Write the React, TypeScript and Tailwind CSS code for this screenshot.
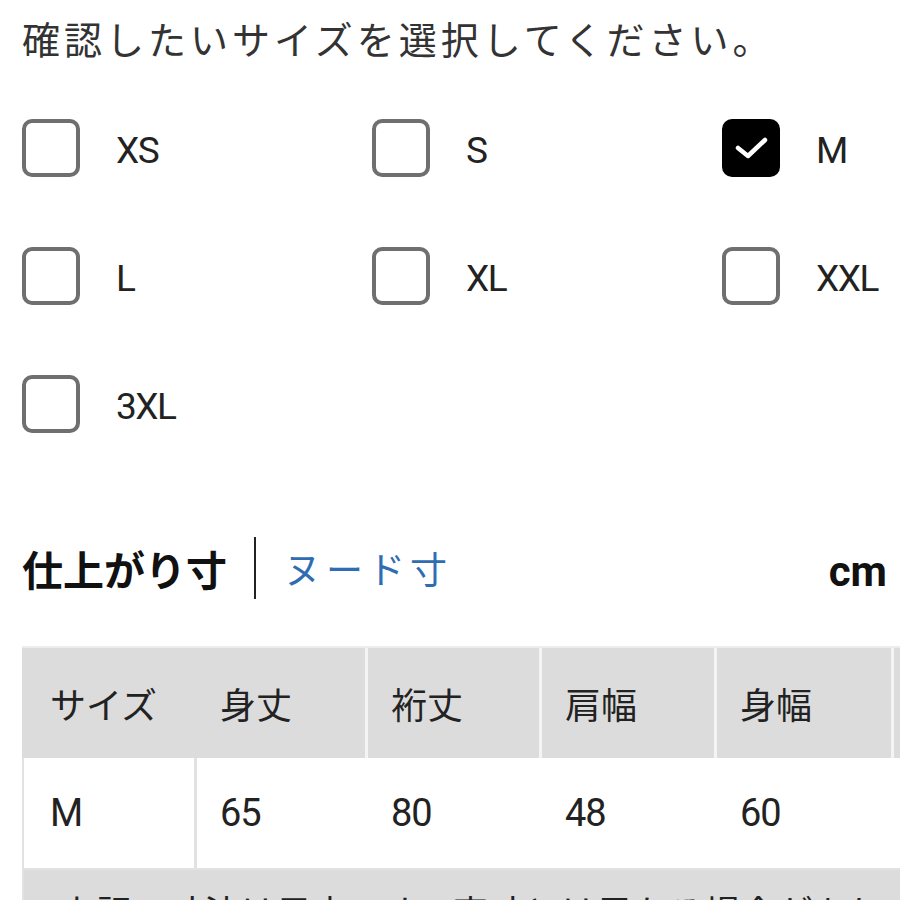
import React from "react";

const sizes = [
  { label: "XS", checked: false },
  { label: "S", checked: false },
  { label: "M", checked: true },
  { label: "L", checked: false },
  { label: "XL", checked: false },
  { label: "XXL", checked: false },
  { label: "3XL", checked: false },
];

const headers = ["サイズ", "身丈", "裄丈", "肩幅", "身幅", ""];
const values = ["M", "65", "80", "48", "60", ""];

const Checkbox = ({ checked }: { checked: boolean }) =>
  checked ? (
    <div className="flex h-[58px] w-[58px] shrink-0 items-center justify-center rounded-[10px] bg-black">
      <svg width="58" height="58" viewBox="0 0 58 58">
        <path d="M16 29 L26 37 L43 21" fill="none" stroke="#fff" strokeWidth="4.5" strokeLinecap="round" strokeLinejoin="round" />
      </svg>
    </div>
  ) : (
    <div className="h-[58px] w-[58px] shrink-0 rounded-[10px] border-[4px] border-[#6f6f6f] bg-white" />
  );

const App = () => {
  return (
    <div className="h-[900px] w-[900px] overflow-hidden bg-white font-['Noto_Sans_CJK_JP',sans-serif] text-[#222]">
      <div className="pl-[22px] pt-[13px]">
        <h1 className="text-[38px] leading-[50px] tracking-[4px] text-[#333]">
          確認したいサイズを選択してください。
        </h1>

        <div className="mt-[56px] grid grid-cols-[350px_350px_1fr] gap-y-[70px]">
          {sizes.map((s) => (
            <div key={s.label} className="flex h-[58px] items-center">
              <Checkbox checked={s.checked} />
              <span className="ml-[36px] pt-[5px] font-['Roboto',sans-serif] text-[37px] tracking-[-1.5px] text-[#222]">
                {s.label}
              </span>
            </div>
          ))}
        </div>

        <div className="mt-[104px] flex h-[62px] items-center pr-[13px]">
          <span className="text-[41px] font-bold leading-none text-[#111]">仕上がり寸</span>
          <div className="ml-[27px] mr-[28px] h-[62px] w-[2px] bg-[#222]" />
          <span className="text-[37px] leading-none tracking-[5px] text-[#2f6db3]">ヌード寸</span>
          <span className="ml-auto pt-[8px] font-['Roboto',sans-serif] text-[42px] font-bold leading-none text-[#111]">cm</span>
        </div>

        <div className="mt-[47px] overflow-hidden">
          <div className="grid w-[1100px] grid-cols-[175px_171px_174px_175px_177px_200px] border-t-2 border-[#ececec]">
            {headers.map((h, i) => (
              <div
                key={i}
                className={
                  i === 0
                    ? "flex h-[110px] items-center bg-[#dcdcdc] pl-[28px] text-[36px] text-[#222]"
                    : "flex h-[110px] items-center border-r-[3px] border-[#f4f4f4] bg-[#dcdcdc] pl-[23px] text-[36px] text-[#222]"
                }
              >
                {h}
              </div>
            ))}
            {values.map((v, i) => (
              <div
                key={i}
                className={
                  i === 0
                    ? "flex h-[110px] items-center border-l-2 border-r-[3px] border-[#e2e2e2] bg-white pl-[26px] font-['Roboto',sans-serif] text-[38px] text-[#222]"
                    : "flex h-[110px] items-center bg-white pl-[23px] font-['Roboto',sans-serif] text-[38px] tracking-[-1px] text-[#222]"
                }
              >
                {v}
              </div>
            ))}
            <div className="col-span-6 h-[120px] border-l-2 border-t-2 border-[#e2e2e2] bg-[#dcdcdc] pl-[36px] pt-[17px] text-[36px] leading-[48px] text-[#222]">
              上記の寸法は目安です。実寸とは異なる場合があります。
            </div>
          </div>
        </div>
      </div>
    </div>
  );
};

export default App;
